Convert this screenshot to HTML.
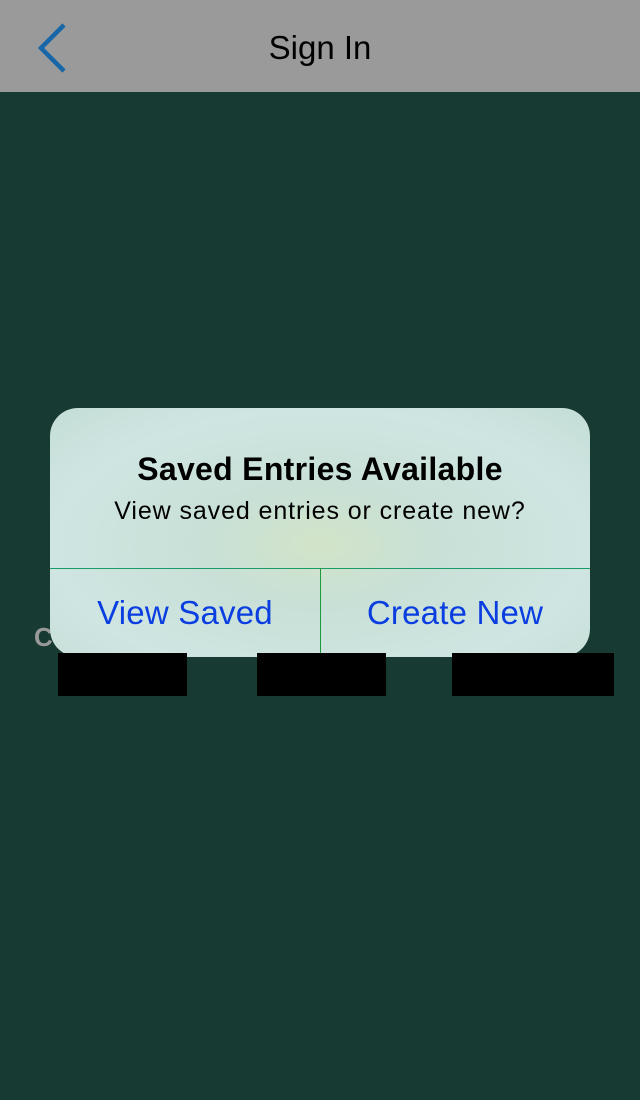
<!DOCTYPE html>
<html><head><style>
body{margin:0;width:640px;height:1100px;background:#173b32;position:relative;overflow:hidden;font-family:"Liberation Sans",sans-serif}
.hdr{position:absolute;left:0;top:0;width:640px;height:92px;background:#9a9a9a}
.t{position:absolute;left:0;width:640px;top:29px;text-align:center;font-size:33px;color:#000}
.dlg{position:absolute;left:50px;top:408px;width:540px;height:249px;border-radius:28px;background:radial-gradient(ellipse at 50% 55%,#d2e4c8 0%,#c8e0d6 30%,#cfe5e2 70%,#c4ddd6 100%);overflow:hidden}
.ti{position:absolute;top:43px;width:540px;text-align:center;font-size:32px;font-weight:bold;color:#000;letter-spacing:0.3px}
.su{position:absolute;top:89px;width:540px;text-align:center;font-size:25px;color:#000;letter-spacing:0.9px}
.hl{position:absolute;top:160px;left:0;width:540px;height:1px;background:#1b9a6a}
.vl{position:absolute;top:160px;left:270px;width:1px;height:89px;background:#1b9a3a}
.b{position:absolute;top:186px;width:270px;text-align:center;font-size:33px;color:#0a3ee0;letter-spacing:0.2px}
.k{position:absolute;top:653px;height:43px;background:#000}
</style></head><body>
<div class="hdr"><svg style="position:absolute;left:36px;top:22px" width="34" height="52"><path d="M28 3 L5 26 L28 49" fill="none" stroke="#1767a8" stroke-width="4.5"/></svg><div class="t">Sign In</div></div>
<div style="position:absolute;left:34px;top:622px;font-size:26px;font-weight:bold;color:#999">C</div>
<div class="dlg"><div class="ti">Saved Entries Available</div><div class="su">View saved entries or create new?</div><div class="hl"></div><div class="vl"></div><div class="b" style="left:0">View Saved</div><div class="b" style="left:270px">Create New</div></div>
<div class="k" style="left:58px;width:129px"></div>
<div class="k" style="left:257px;width:129px"></div>
<div class="k" style="left:452px;width:162px"></div>
</body></html>
